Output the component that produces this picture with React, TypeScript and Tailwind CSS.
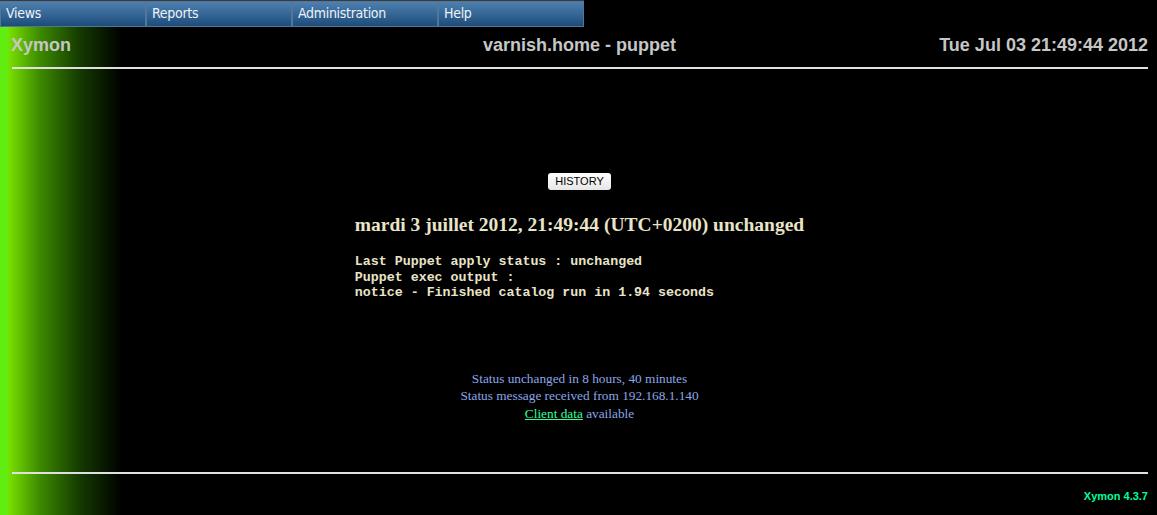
const menu = ['Views', 'Reports', 'Administration', 'Help']

export default function App() {
  return (
    <div className="relative min-h-screen h-[515px] overflow-hidden bg-[linear-gradient(to_right,#5fee10_0px,#5fee10_8px,#7ae200_8px,#3c8a00_40px,#143a00_80px,#000_122px)] font-['Liberation_Sans',Arial,sans-serif]">
      {/* Menu bar */}
      <div className="absolute left-0 top-0 flex h-[27px] border-t border-[#3a3a3a]">
        {menu.map((m) => (
          <div
            key={m}
            className="flex h-[26px] w-[146px] items-center border border-[#52769a] bg-[linear-gradient(to_bottom,#4d80b0,#1d4c7a)] pb-[2px] pl-[5px] font-['DejaVu_Sans_Condensed','DejaVu_Sans',sans-serif] text-[14px] tracking-[-0.3px] text-[#eef2f6]"
          >
            {m}
          </div>
        ))}
      </div>

      <div className="pl-[11px] pr-[9px] pt-[35px]">
        {/* Header */}
        <div className="grid grid-cols-3 items-center text-[18px] font-bold leading-[20px] text-[#c6c6c6]">
          <span>Xymon</span>
          <span className="text-center">varnish.home - puppet</span>
          <span className="text-right">Tue Jul 03 21:49:44 2012</span>
        </div>
        <div className="ml-[1px] mt-[12px] h-[2px] bg-[#e0e0e0]" />

        {/* Body */}
        <div className="flex flex-col items-center pt-[104px]">
          <button className="h-[17px] rounded-[3px] bg-[linear-gradient(to_bottom,#ffffff,#e6e6e6)] px-[7px] text-[11px] leading-[17px] text-black">
            HISTORY
          </button>
          <div className="mt-[23px]">
            <h3 className="font-['Liberation_Serif','Times_New_Roman',serif] text-[19.5px] font-bold leading-[24px] text-[#e8e4c8]">
              mardi 3 juillet 2012, 21:49:44 (UTC+0200) unchanged
            </h3>
            <pre className="mt-[17px] font-['Liberation_Mono','Courier_New',monospace] text-[13.3px] font-bold leading-[15.5px] text-[#e8e4c8]">
              {`Last Puppet apply status : unchanged
Puppet exec output :
notice - Finished catalog run in 1.94 seconds`}
            </pre>
          </div>
          <div className="mt-[69px] text-center font-['Liberation_Serif','Times_New_Roman',serif] text-[13.3px] leading-[17.5px] text-[#8aa6e6]">
            <div>Status unchanged in 8 hours, 40 minutes</div>
            <div>Status message received from 192.168.1.140</div>
            <div>
              <a href="#" className="text-[#33ff99] underline">
                Client data
              </a>{' '}
              available
            </div>
          </div>
        </div>

        <div className="ml-[1px] mt-[50px] h-[2px] bg-[#e0e0e0]" />
        <div className="mt-[14px] text-right text-[11px] font-bold text-[#00ff99]">Xymon 4.3.7</div>
      </div>
    </div>
  )
}
